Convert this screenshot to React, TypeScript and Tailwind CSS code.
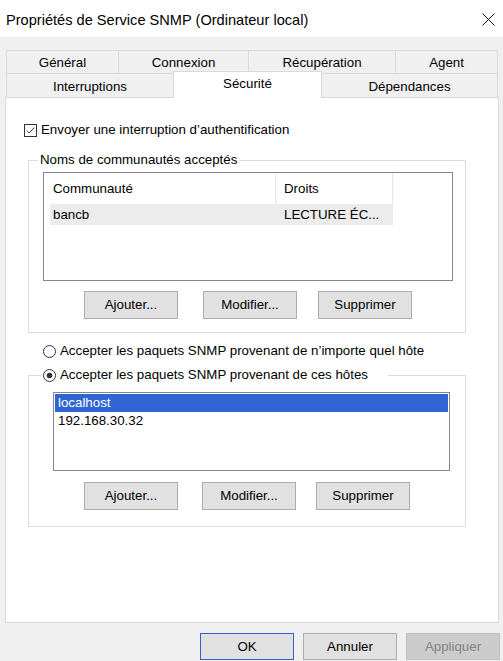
import React from "react";

function Btn({ children, className = "" }: { children: React.ReactNode; className?: string }) {
  return (
    <button
      className={`h-[28px] w-[94px] shrink-0 border border-[#adadad] bg-[#e1e1e1] text-[13.3px] leading-[16px] text-black ${className}`}
    >
      {children}
    </button>
  );
}

function Radio({ checked }: { checked?: boolean }) {
  return (
    <svg width="13" height="13" viewBox="0 0 13 13" className="shrink-0">
      <circle cx="6.5" cy="6.5" r="6" fill="white" stroke="#333333" strokeWidth="1" />
      {checked && <circle cx="6.5" cy="6.5" r="2.8" fill="#333333" />}
    </svg>
  );
}

export default function App() {
  return (
    <div className="flex h-[661px] w-[503px] flex-col overflow-hidden bg-[#f0f0f0] font-['Liberation_Sans',Arial,sans-serif] text-[13.3px] leading-[16px] text-black">
      {/* Title bar */}
      <div className="flex h-[37px] shrink-0 items-center justify-between bg-white pl-[6px] pr-[8px]">
        <span className="pt-[2px] text-[14.6px] leading-[20px]">Propriétés de Service SNMP (Ordinateur local)</span>
        <svg width="13" height="13" viewBox="0 0 13 13" className="mt-[1px]">
          <path d="M0.5 0.5 L12.5 12.5 M12.5 0.5 L0.5 12.5" stroke="#111" strokeWidth="1" />
        </svg>
      </div>

      {/* Tabs */}
      <div className="ml-[6px] mt-[13px] w-[492px]">
        <div className="flex h-[23px]">
          <div className="flex w-[112px] items-center justify-center border-l border-t border-[#d9d9d9] pt-[2px]">Général</div>
          <div className="flex w-[130px] items-center justify-center border-l border-t border-[#d9d9d9] pt-[2px]">Connexion</div>
          <div className="flex w-[147px] items-center justify-center border-l border-t border-[#d9d9d9] pt-[2px]">Récupération</div>
          <div className="flex w-[103px] items-center justify-center border-l border-r border-t border-[#d9d9d9] pt-[2px]">Agent</div>
        </div>
        <div className="flex h-[24px] items-start">
          <div className="flex h-[24px] w-[167px] items-center justify-center border-l border-t border-[#d9d9d9] pt-[2px]">Interruptions</div>
          <div className="relative z-10 -mt-[2px] flex h-[27px] w-[149px] items-center justify-center border-l border-r border-t border-[#d9d9d9] bg-white pb-[2px]">
            Sécurité
          </div>
          <div className="flex h-[24px] w-[176px] items-center justify-center border-r border-t border-[#d9d9d9] pt-[2px]">Dépendances</div>
        </div>
      </div>

      {/* Panel */}
      <div className="ml-[5px] h-[526px] w-[494px] shrink-0 border border-[#d9d9d9] bg-white">
        {/* Checkbox */}
        <div className="ml-[18px] mt-[24px] flex h-[16px] items-center gap-[4px]">
          <svg width="13" height="13" viewBox="0 0 13 13" className="shrink-0">
            <rect x="0.5" y="0.5" width="12" height="12" fill="white" stroke="#333333" />
            <path d="M2.8 6.6 L5.2 9 L10.2 3.6" fill="none" stroke="#333333" strokeWidth="1" />
          </svg>
          <span>Envoyer une interruption d’authentification</span>
        </div>

        {/* Group 1 */}
        <fieldset className="ml-[22px] mt-[14px] w-[438px] border border-[#dcdcdc] p-0">
          <legend className="ml-[9px] px-[2px] leading-[16px]">Noms de communautés acceptés</legend>
          <div className="pb-[13px] pl-[14px] pt-[4px]">
            <div className="h-[109px] w-[410px] border border-[#828790] bg-white pl-[6px]">
              <div className="flex h-[31px]">
                <div className="flex w-[226px] items-center border-r border-[#e5e5e5] pl-[3px]">Communauté</div>
                <div className="flex w-[117px] items-center border-r border-[#e5e5e5] pl-[8px]">Droits</div>
              </div>
              <div className="flex h-[21px] w-[343px] items-center bg-[#ececec]">
                <div className="w-[226px] pl-[3px]">bancb</div>
                <div className="w-[117px] truncate pl-[8px]">LECTURE ÉC...</div>
              </div>
            </div>
            <div className="ml-[41px] mt-[10px] flex">
              <Btn>Ajouter...</Btn>
              <Btn className="ml-[25px]">Modifier...</Btn>
              <Btn className="ml-[21px]">Supprimer</Btn>
            </div>
          </div>
        </fieldset>

        {/* Radio 1 */}
        <div className="ml-[37px] mt-[10px] flex h-[16px] items-center gap-[4px]">
          <Radio />
          <span>Accepter les paquets SNMP provenant de n’importe quel hôte</span>
        </div>

        {/* Group 2 */}
        <fieldset className="ml-[22px] mt-[8px] w-[438px] border border-[#dcdcdc] p-0">
          <legend className="ml-[12px] pl-[2px] pr-[20px]">
            <div className="flex h-[16px] items-center gap-[4px]">
              <Radio checked />
              <span>Accepter les paquets SNMP provenant de ces hôtes</span>
            </div>
          </legend>
          <div className="pb-[16px] pl-[24px] pt-[9px]">
            <div className="h-[79px] w-[397px] border border-[#828790] bg-white p-[1px]">
              <div className="h-[18px] bg-[#3165d4] pl-[3px] leading-[18px] text-white">localhost</div>
              <div className="h-[17px] pl-[3px] leading-[17px]">192.168.30.32</div>
            </div>
            <div className="ml-[31px] mt-[11px] flex">
              <Btn>Ajouter...</Btn>
              <Btn className="ml-[24px]">Modifier...</Btn>
              <Btn className="ml-[20px]">Supprimer</Btn>
            </div>
          </div>
        </fieldset>
      </div>

      {/* Bottom buttons */}
      <div className="mt-[10px] flex justify-end gap-[9px] pr-[3px]">
        <button className="h-[27px] w-[94px] border border-[#3b5bd0] bg-[#e1e1e1] text-[13.3px] leading-[16px] text-black">OK</button>
        <button className="h-[27px] w-[94px] border border-[#adadad] bg-[#e1e1e1] text-[13.3px] leading-[16px] text-black">Annuler</button>
        <button className="h-[27px] w-[94px] border border-[#bfbfbf] bg-[#cccccc] text-[13.3px] leading-[16px] text-[#838383]">Appliquer</button>
      </div>
    </div>
  );
}
